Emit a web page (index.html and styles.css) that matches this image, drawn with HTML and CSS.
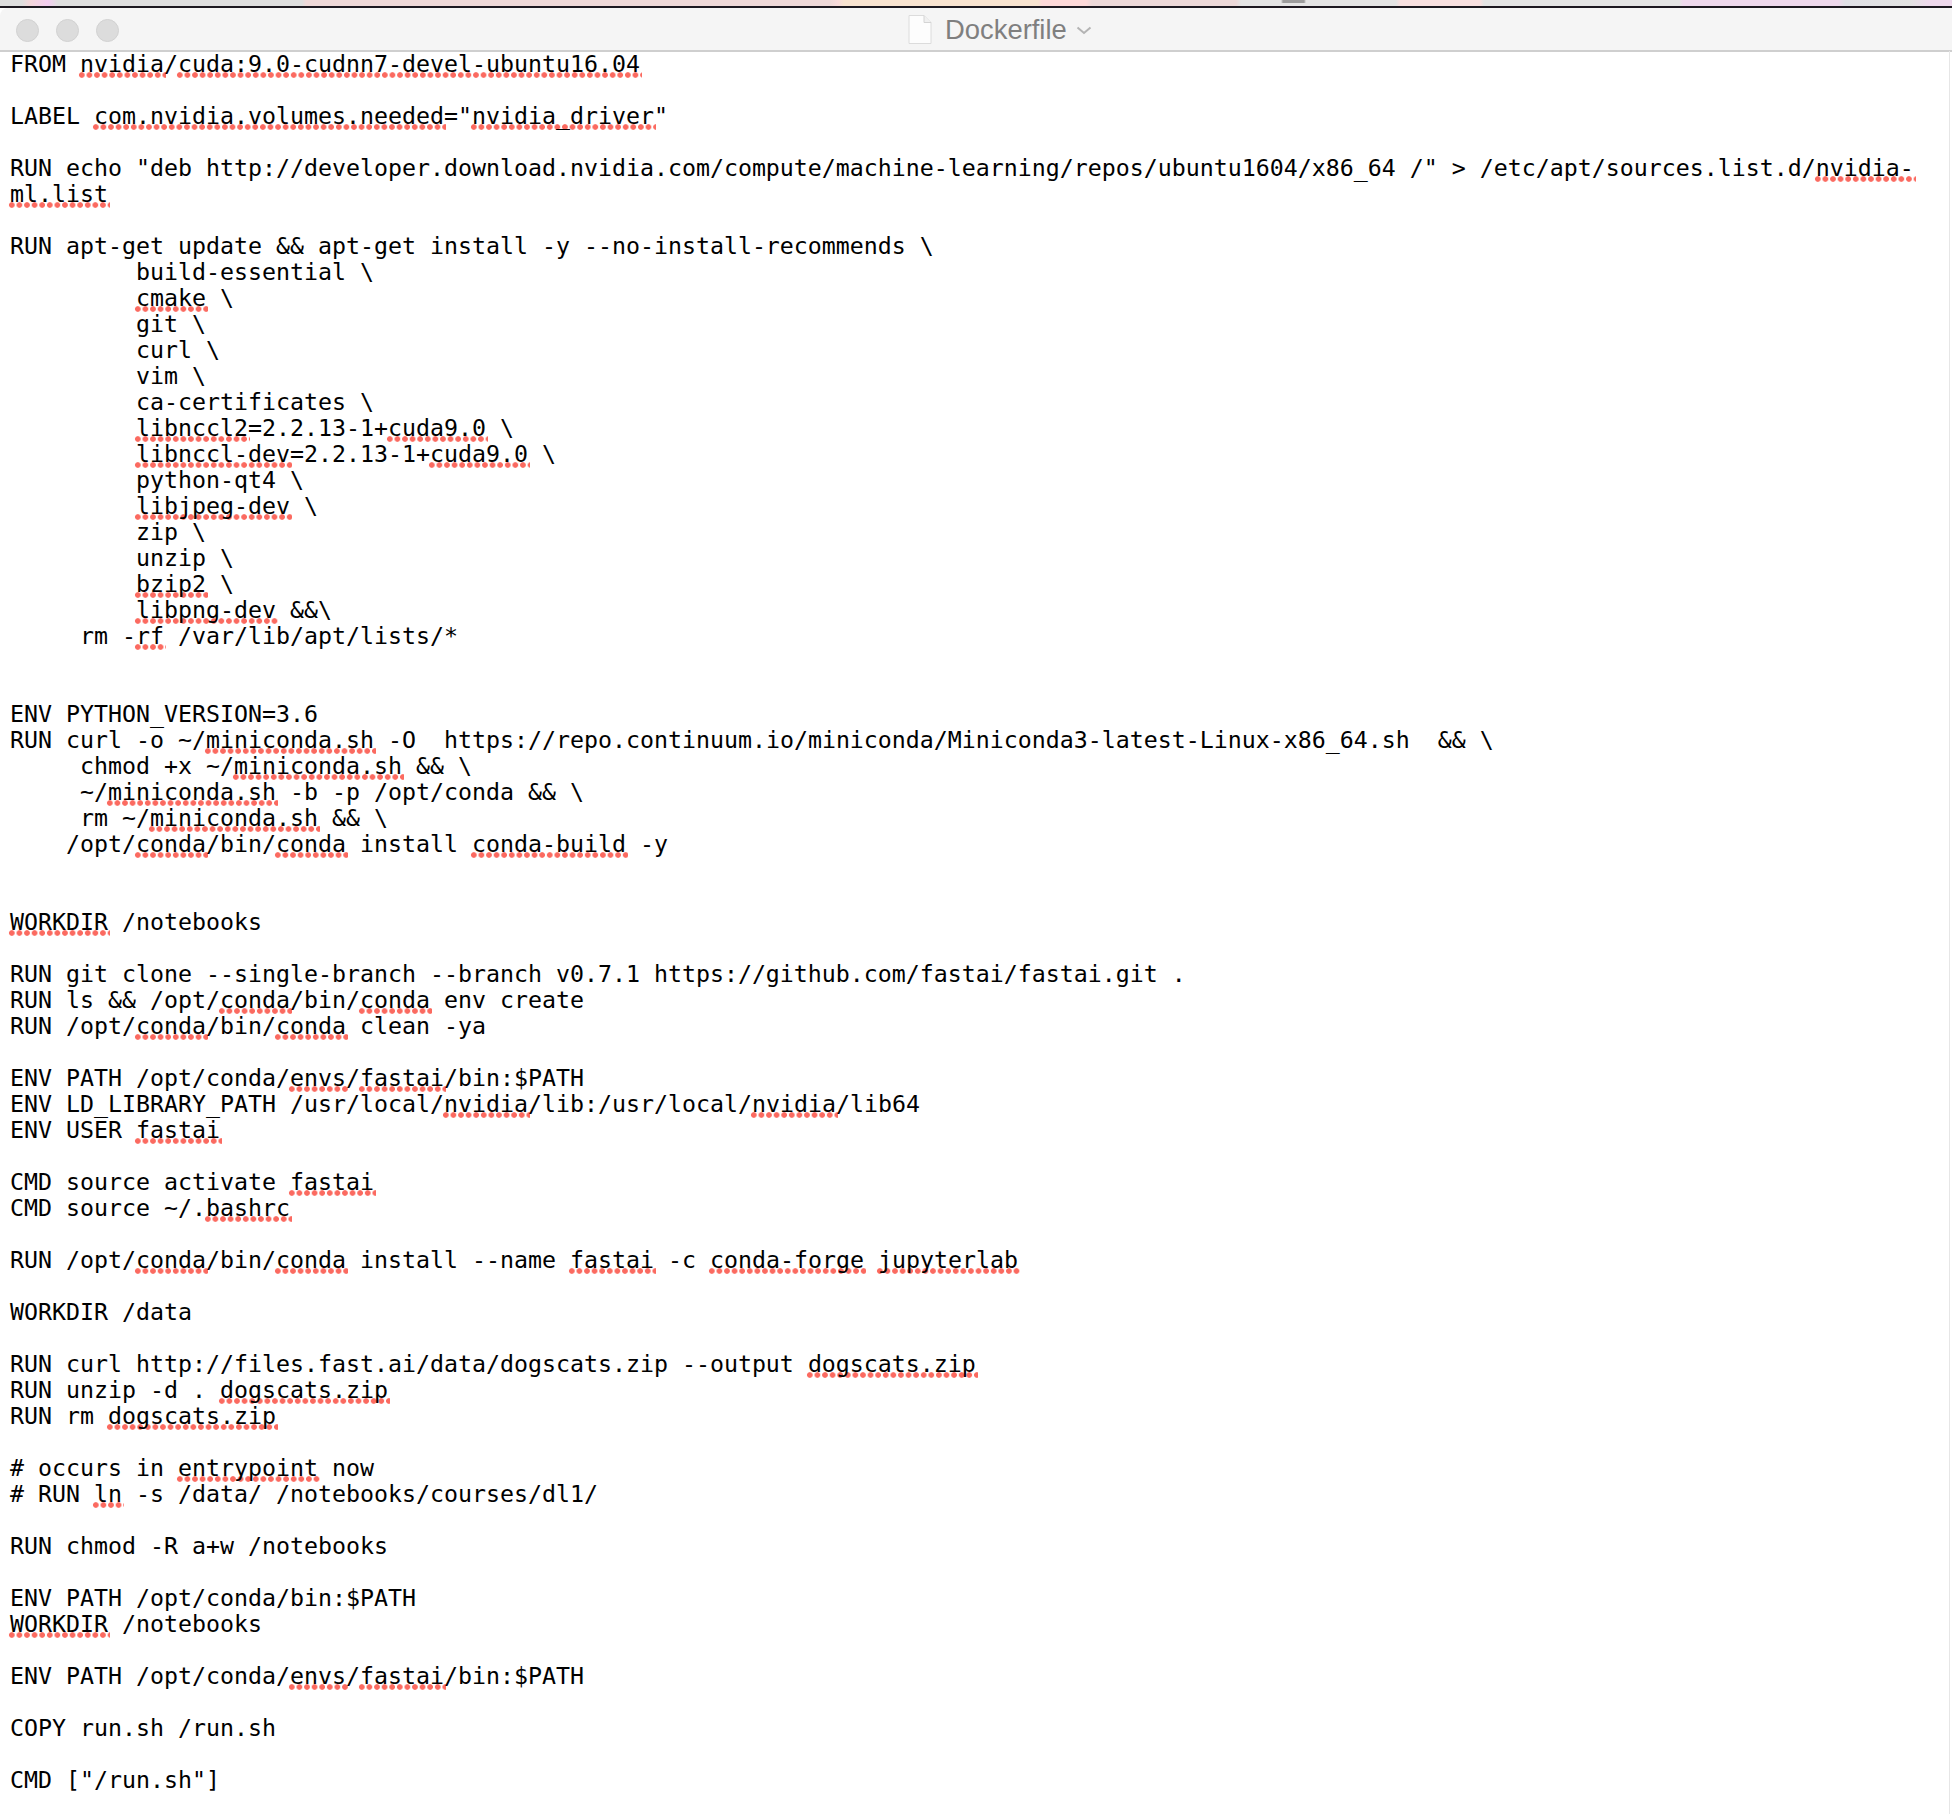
FILE: index.html
```html
<!DOCTYPE html>
<html lang="en">
<head>
<meta charset="utf-8">
<title>Dockerfile</title>
<link rel="stylesheet" href="styles.css">
</head>
<body>
<div class="desktop-strip"></div>
<main class="window">
<header class="titlebar">
<div class="lights"><i class="light"></i><i class="light"></i><i class="light"></i></div>
<div class="title">
<svg class="doc-icon" viewBox="0 0 24 31" aria-hidden="true"><path d="M1 1.5h15l7 7v21H1z" fill="#fdfdfd" stroke="#dcdcdc"/><path d="M16 1.5v7h7" fill="#f0f0f0" stroke="#d4d4d4"/></svg>
<span class="title-text">Dockerfile</span>
<svg class="chevron" viewBox="0 0 16 9" aria-hidden="true"><path d="M1.5 1.5 8 7l6.5-5.5" fill="none" stroke="#b4b4b4" stroke-width="2"/></svg>
</div>
</header>
<pre class="editor">FROM <span class="sp">nvidia</span>/<span class="sp">cuda:9.0-cudnn7-devel-ubuntu16.04</span>

LABEL <span class="sp">com.nvidia.volumes.needed</span>="<span class="sp">nvidia_driver</span>"

RUN echo "deb http://developer.download.nvidia.com/compute/machine-learning/repos/ubuntu1604/x86_64 /" &gt; /etc/apt/sources.list.d/<span class="sp">nvidia-</span><span class="sp">ml.list</span>

RUN apt-get update &amp;&amp; apt-get install -y --no-install-recommends \
         build-essential \
         <span class="sp">cmake</span> \
         git \
         curl \
         vim \
         ca-certificates \
         <span class="sp">libnccl2</span>=2.2.13-1+<span class="sp">cuda9.0</span> \
         <span class="sp">libnccl-dev</span>=2.2.13-1+<span class="sp">cuda9.0</span> \
         python-qt4 \
         <span class="sp">libjpeg-dev</span> \
         zip \
         unzip \
         <span class="sp">bzip2</span> \
         <span class="sp">libpng-dev</span> &amp;&amp;\
     rm -<span class="sp">rf</span> /var/lib/apt/lists/*


ENV PYTHON_VERSION=3.6
RUN curl -o ~/<span class="sp">miniconda.sh</span> -O  https://repo.continuum.io/miniconda/Miniconda3-latest-Linux-x86_64.sh  &amp;&amp; \
     chmod +x ~/<span class="sp">miniconda.sh</span> &amp;&amp; \
     ~/<span class="sp">miniconda.sh</span> -b -p /opt/conda &amp;&amp; \
     rm ~/<span class="sp">miniconda.sh</span> &amp;&amp; \
    /opt/<span class="sp">conda</span>/bin/<span class="sp">conda</span> install <span class="sp">conda-build</span> -y


<span class="sp">WORKDIR</span> /notebooks

RUN git clone --single-branch --branch v0.7.1 https://github.com/fastai/fastai.git .
RUN ls &amp;&amp; /opt/<span class="sp">conda</span>/bin/<span class="sp">conda</span> env create
RUN /opt/<span class="sp">conda</span>/bin/<span class="sp">conda</span> clean -ya

ENV PATH /opt/conda/<span class="sp">envs</span>/<span class="sp">fastai</span>/bin:$PATH
ENV LD_LIBRARY_PATH /usr/local/<span class="sp">nvidia</span>/lib:/usr/local/<span class="sp">nvidia</span>/lib64
ENV USER <span class="sp">fastai</span>

CMD source activate <span class="sp">fastai</span>
CMD source ~/.<span class="sp">bashrc</span>

RUN /opt/<span class="sp">conda</span>/bin/<span class="sp">conda</span> install --name <span class="sp">fastai</span> -c <span class="sp">conda-forge</span> <span class="sp">jupyterlab</span>

WORKDIR /data

RUN curl http://files.fast.ai/data/dogscats.zip --output <span class="sp">dogscats.zip</span>
RUN unzip -d . <span class="sp">dogscats.zip</span>
RUN rm <span class="sp">dogscats.zip</span>

# occurs in <span class="sp">entrypoint</span> now
# RUN <span class="sp">ln</span> -s /data/ /notebooks/courses/dl1/

RUN chmod -R a+w /notebooks

ENV PATH /opt/conda/bin:$PATH
<span class="sp">WORKDIR</span> /notebooks

ENV PATH /opt/conda/<span class="sp">envs</span>/<span class="sp">fastai</span>/bin:$PATH

COPY run.sh /run.sh

CMD ["/run.sh"]
</pre>
</main>
</body>
</html>
```
FILE: styles.css
```css
* { box-sizing: border-box; }
html, body { margin: 0; height: 100%; background: #fff; }
body { display: flex; flex-direction: column; min-height: 1814px; overflow: hidden; }

.desktop-strip {
  height: 6px;
  flex: none;
  background:
    linear-gradient(90deg, transparent 1281px, #9c9c9c 1283px, #9c9c9c 1304px, transparent 1306px) 0 0 / 100% 3px no-repeat,
    linear-gradient(90deg,
      #dedede 0, #dedede 22px, #f3d6da 30px, #f3cdf0 48px, #dedede 58px,
      #dedede 302px, #eed8d8 306px, #eed8d8 830px, #f8dada 838px, #f8e3d0 844px,
      #f8e3d0 1038px, #fdd8d8 1042px, #fdd8d8 1086px, #ecd8d8 1092px, #ecd8d8 1236px,
      #e4e4e4 1241px, #e4e4e4 1396px, #f8e0e0 1400px, #f8e0e0 1480px, #e4e4e4 1484px,
      #e4e4e4 1679px, #eed8ec 1683px, #eed8ec 1838px, #e0e0e6 1845px, #e2e2e2 1909px, #eed8ec 1930px);
}

.window {
  flex: 1;
  display: flex;
  flex-direction: column;
  background: #fff;
  border-top: 2px solid #1c1820;
}

.titlebar {
  height: 44px;
  flex: none;
  display: grid;
  grid-template-columns: 908px auto;
  align-items: center;
  background: #f5f5f5;
  border-top-left-radius: 8px;
  border-bottom: 2px solid #cfcfcf;
}

.lights { display: flex; gap: 17px; padding: 2px 0 0 16px; }
.light { width: 23px; height: 23px; border-radius: 50%; background: #dcdcdc; border: 1px solid #d2d2d2; }

.title { display: flex; align-items: center; }
.doc-icon { width: 24px; height: 31px; display: block; }
.title-text {
  margin-left: 13px;
  padding-top: 2px;
  font: 27.4px/1 "Liberation Sans", Arial, sans-serif;
  color: #7f7f7f;
}
.chevron { width: 16px; height: 9px; margin: 2px 0 0 9px; }

.editor {
  flex: 1;
  margin: -1px 2px 0 0;
  padding: 0 3px 0 10px;
  font-family: "DejaVu Sans Mono", "Liberation Mono", monospace;
  font-size: 23.25px;
  line-height: 26px;
  color: #000;
  white-space: pre-wrap;
  overflow: hidden;
  border-right: 1px solid #e6e6e6;
}

.sp {
  padding: 0 2px 2px;
  margin: 0 -2px;
  background-image: radial-gradient(circle at 50% 50%, #fb6a60 2.4px, rgba(251, 106, 96, 0) 3.2px);
  background-size: 7.6px 8px;
  background-repeat: repeat-x;
  background-position: left bottom;
}
```
